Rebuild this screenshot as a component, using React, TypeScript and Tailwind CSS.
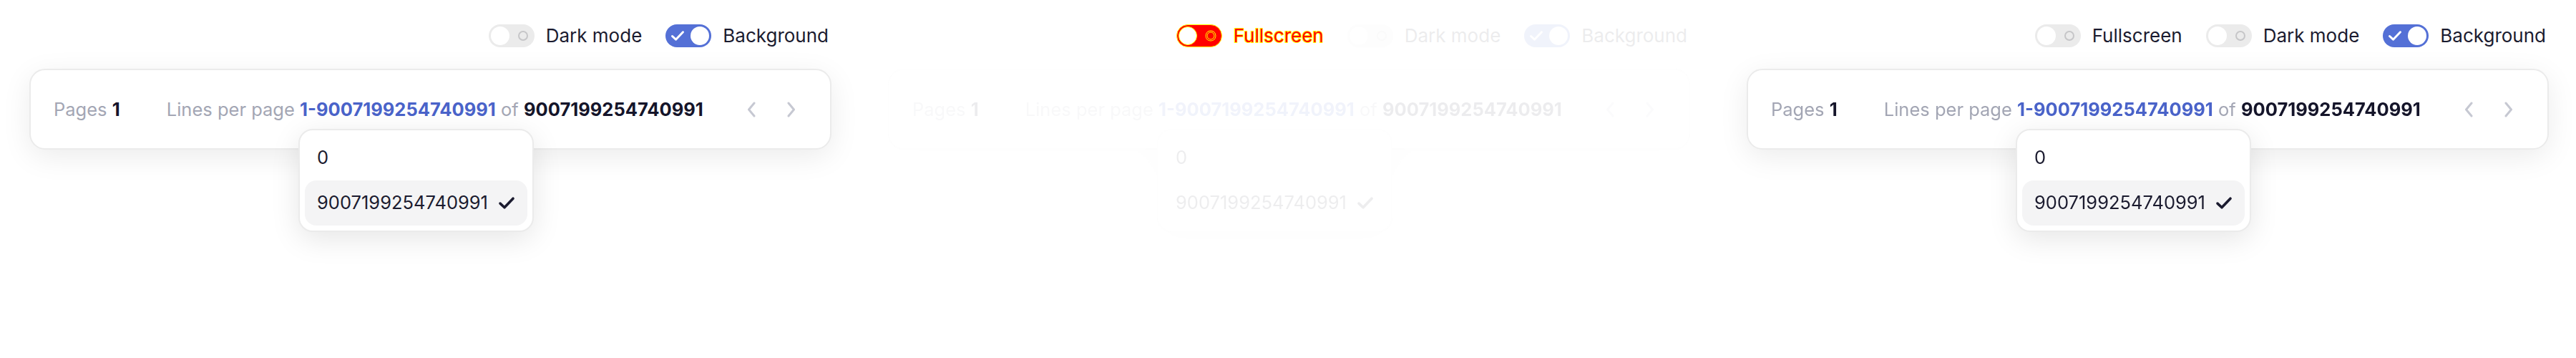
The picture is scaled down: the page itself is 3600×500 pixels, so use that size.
import React from "react";

function Check({ className, color, w = 20, h = 16, sw = 3 }: { className?: string; color: string; w?: number; h?: number; sw?: number }) {
  return (
    <svg className={className} width={w} height={h} viewBox="0 0 20 16" fill="none">
      <path d="M2.5 8.5 L7.5 13.2 L17.5 2.8" stroke={color} strokeWidth={sw} strokeLinecap="round" strokeLinejoin="round" />
    </svg>
  );
}

function Toggle({ on, hl }: { on?: boolean; hl?: boolean }) {
  if (hl) {
    return (
      <div className="w-[64px] h-[32px] rounded-full bg-[#ff0000] border border-[#ffff00] px-[2px] flex items-center">
        <div className="w-[26px] h-[26px] rounded-full bg-white border border-[#ffff00]" />
        <svg className="ml-[11px]" width="16" height="16" viewBox="0 0 16 16" fill="none">
          <circle cx="8" cy="8" r="6" stroke="#ffff00" strokeWidth="3" />
          <circle cx="8" cy="8" r="6" stroke="#ff0000" strokeWidth="1.2" />
        </svg>
      </div>
    );
  }
  if (on) {
    return (
      <div className="w-[64px] h-[32px] rounded-full bg-[#5470d6] px-[3px] flex items-center">
        <Check className="ml-[4px]" color="#ffffff" w={20} h={16} sw={3} />
        <div className="ml-auto w-[26px] h-[26px] rounded-full bg-white" />
      </div>
    );
  }
  return (
    <div className="w-[64px] h-[32px] rounded-full bg-[#ebebeb] px-[3px] flex items-center">
      <div className="w-[26px] h-[26px] rounded-full bg-white" />
      <div className="ml-[12px] w-[14px] h-[14px] rounded-full border-2 border-[#c6c6c8]" />
    </div>
  );
}

function ToggleItem({ label, on, hl, faded }: { label: string; on?: boolean; hl?: boolean; faded?: boolean }) {
  return (
    <div className={`flex items-center gap-[16px] ${faded ? "opacity-[0.08]" : ""}`}>
      <Toggle on={on} hl={hl} />
      {hl ? (
        <span className="text-[26px] leading-[32px] text-[#ff0000] [-webkit-text-stroke:2px_#ffff00] [paint-order:stroke_fill]">
          {label}
        </span>
      ) : (
        <span className="text-[26px] leading-[32px] text-[#1b1b2f]">{label}</span>
      )}
    </div>
  );
}

function Chevron({ dir }: { dir: "l" | "r" }) {
  return (
    <button className="w-[40px] h-[40px] flex items-center justify-center">
      <svg width="14" height="22" viewBox="0 0 14 22" fill="none">
        {dir === "l" ? (
          <path d="M11 2 L3.5 11 L11 20" stroke="#c6c8d2" strokeWidth="3" strokeLinecap="round" strokeLinejoin="round" />
        ) : (
          <path d="M3 2 L10.5 11 L3 20" stroke="#c6c8d2" strokeWidth="3" strokeLinecap="round" strokeLinejoin="round" />
        )}
      </svg>
    </button>
  );
}

function Panel({ fullscreen, hl }: { fullscreen?: boolean; hl?: boolean }) {
  const faded = !!hl;
  return (
    <div className="w-[1200px] shrink-0 pl-[41px] pt-[34px]">
      <div className="w-[1121px] flex justify-end items-center gap-[33px] pr-[4px]">
        {fullscreen && <ToggleItem label="Fullscreen" hl={hl} />}
        <ToggleItem label="Dark mode" faded={faded} />
        <ToggleItem label="Background" on faded={faded} />
      </div>
      <div className={`mt-[30px] ${faded ? "opacity-[0.08]" : ""}`}>
        <div className="relative w-[1121px] h-[113px] rounded-[22px] border-2 border-[#ebebeb] bg-white shadow-[0_10px_40px_rgba(0,0,0,0.08)] flex items-center pl-[32px] pr-[34px] text-[25.5px] leading-[36px]">
          <div className="text-[#a3a6b4]">
            Pages <span className="font-bold text-[#15152a]">1</span>
          </div>
          <div className="ml-[65px] text-[#a3a6b4] whitespace-nowrap">
            Lines per page{" "}
            <span className="relative inline-block font-bold text-[#4a63c9]">
              1-9007199254740991
              <div className="absolute left-[-2px] top-[45px] z-10 w-[329px] rounded-[20px] border-2 border-[#ebebeb] bg-white p-[7px] shadow-[0_10px_40px_rgba(0,0,0,0.10)] font-normal text-[#1b1b2f]">
                <div className="h-[63px] flex items-center px-[17px]">0</div>
                <div className="h-[63px] flex items-center px-[17px] rounded-[16px] bg-[#f4f4f5]">
                  9007199254740991
                  <Check className="ml-[14px]" color="#1b1b2f" w={26} h={21} sw={3} />
                </div>
              </div>
            </span>{" "}
            of <span className="font-bold text-[#15152a]">9007199254740991</span>
          </div>
          <div className="ml-auto flex items-center gap-[16px]">
            <Chevron dir="l" />
            <Chevron dir="r" />
          </div>
        </div>
      </div>
    </div>
  );
}

export default function App() {
  return (
    <div className="w-[3600px] h-[500px] bg-white flex font-['Inter',sans-serif] overflow-hidden">
      <Panel />
      <Panel fullscreen hl />
      <Panel fullscreen />
    </div>
  );
}
